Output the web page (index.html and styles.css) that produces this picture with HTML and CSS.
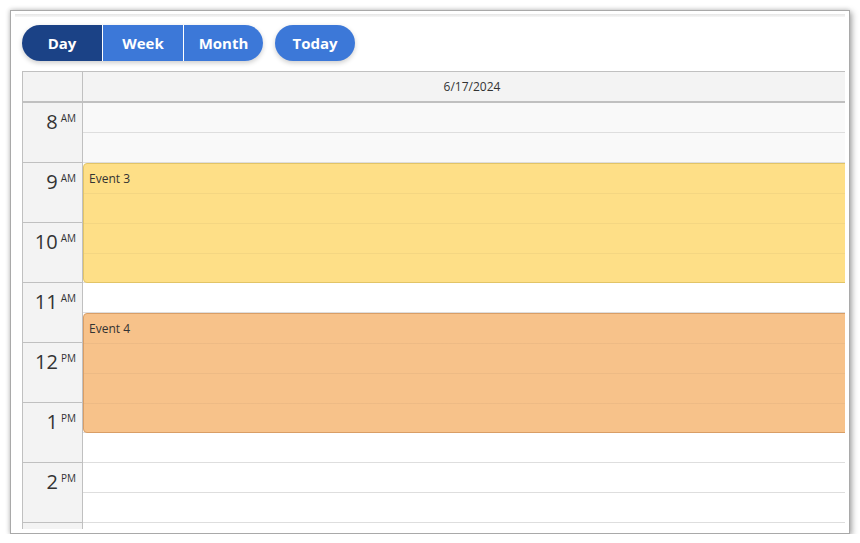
FILE: index.html
```html
<!DOCTYPE html>
<html lang="en">
<head>
  <meta charset="UTF-8">
  <title>Calendar - Day</title>
  <link rel="stylesheet" href="styles.css">
</head>
<body>
  <div class="frame">
    <div class="viewport">
      <div class="topbar"></div>
      <div class="content">
        <div class="toolbar">
          <div class="group">
            <button class="btn active">Day</button>
            <button class="btn">Week</button>
            <button class="btn">Month</button>
          </div>
          <button class="btn single">Today</button>
        </div>

        <div class="calendar">
          <div class="head">
            <div class="corner"></div>
            <div class="colhead">6/17/2024</div>
          </div>
          <div class="body">
            <div class="times">
              <div class="hour"><span class="num">8</span><span class="ampm">AM</span></div>
              <div class="hour"><span class="num">9</span><span class="ampm">AM</span></div>
              <div class="hour"><span class="num">10</span><span class="ampm">AM</span></div>
              <div class="hour"><span class="num">11</span><span class="ampm">AM</span></div>
              <div class="hour"><span class="num">12</span><span class="ampm">PM</span></div>
              <div class="hour"><span class="num">1</span><span class="ampm">PM</span></div>
              <div class="hour"><span class="num">2</span><span class="ampm">PM</span></div>
              <div class="hour"></div>
            </div>
            <div class="day">
              <div class="cell off"></div>
              <div class="cell off"></div>
              <div class="cell"></div>
              <div class="cell"></div>
              <div class="cell"></div>
              <div class="cell"></div>
              <div class="cell"></div>
              <div class="cell"></div>
              <div class="cell"></div>
              <div class="cell"></div>
              <div class="cell"></div>
              <div class="cell"></div>
              <div class="cell"></div>
              <div class="cell"></div>
              <div class="cell"></div>
              <div class="cell"></div>

              <div class="event yellow" style="top: 60px; height: 120px;">Event 3</div>
              <div class="event orange" style="top: 210px; height: 120px;">Event 4</div>
            </div>
          </div>
        </div>
      </div>
    </div>
  </div>
</body>
</html>
```

FILE: styles.css
```css
body {
  margin: 0;
  background: #fff;
  font-family: 'Open Sans', 'Noto Sans', Arial, sans-serif;
  color: #333;
}

.frame {
  margin: 10px 0 0 10px;
  width: 830px;
  height: 515px;
  padding: 3px 4px 4px 4px;
  background: #fff;
  border: 1px solid #a9a9a9;
  box-shadow: 2px 2px 6px rgba(0, 0, 0, 0.35), -1px -1px 4px rgba(0, 0, 0, 0.12);
}

.viewport {
  height: 515px;
  overflow: hidden;
}

.topbar {
  height: 3px;
  background: linear-gradient(to bottom, #e6e6e6, #f6f6f6);
}

.content {
  padding: 8px 0 0 7px;
}

/* toolbar */

.toolbar {
  display: flex;
  gap: 12px;
  margin-bottom: 10px;
}

.group {
  display: flex;
  border-radius: 18px;
  overflow: hidden;
  box-shadow: 0 2px 5px rgba(0, 0, 0, 0.2);
}

.btn {
  width: 80px;
  height: 36px;
  border: none;
  background: #3c78d8;
  color: #fff;
  font-family: inherit;
  font-size: 15px;
  font-weight: bold;
  padding: 0;
  cursor: pointer;
}

.group .btn + .btn {
  border-left: 1px solid #fff;
}

.group .btn:nth-child(2) {
  width: 81px;
}

.btn.active {
  background: #1b4286;
}

.btn.single {
  border-radius: 18px;
  box-shadow: 0 2px 5px rgba(0, 0, 0, 0.2);
}

/* calendar */

.calendar {
  width: 839px;
}

.head {
  display: flex;
  height: 29px;
  border-top: 1px solid #c0c0c0;
  border-bottom: 2px solid #c0c0c0;
  background: #f3f3f3;
}

.corner {
  width: 59px;
  border-left: 1px solid #c0c0c0;
  border-right: 1px solid #c0c0c0;
}

.colhead {
  flex: 1;
  text-align: center;
  font-size: 12px;
  line-height: 30px;
}

.body {
  display: flex;
}

.times {
  width: 59px;
  background: #f3f3f3;
  border-left: 1px solid #c0c0c0;
  border-right: 1px solid #c0c0c0;
}

.hour {
  height: 60px;
  box-sizing: border-box;
  border-bottom: 1px solid #c0c0c0;
  text-align: right;
  padding-right: 6px;
  padding-top: 5px;
}

.num {
  font-size: 20px;
  line-height: 28px;
}

.ampm {
  font-size: 10px;
  vertical-align: 7px;
  margin-left: 3px;
}

.day {
  flex: 1;
  position: relative;
}

.cell {
  height: 29px;
  border-bottom: 1px solid #dedede;
  background: #fff;
}

.cell.off {
  background: #f9f9f9;
}

.event {
  position: absolute;
  left: 0;
  right: 0;
  box-sizing: border-box;
  border-radius: 4px;
  font-size: 12px;
  padding: 6px 5px;
  color: #333;
  background-image: repeating-linear-gradient(to bottom, transparent 0, transparent 29px, rgba(0, 0, 0, 0.04) 29px, rgba(0, 0, 0, 0.04) 30px);
}

.event.yellow {
  background-color: #fedf87;
  border: 1px solid #e2c467;
}

.event.orange {
  background-color: #f7c28a;
  border: 1px solid #d99e66;
}
```
